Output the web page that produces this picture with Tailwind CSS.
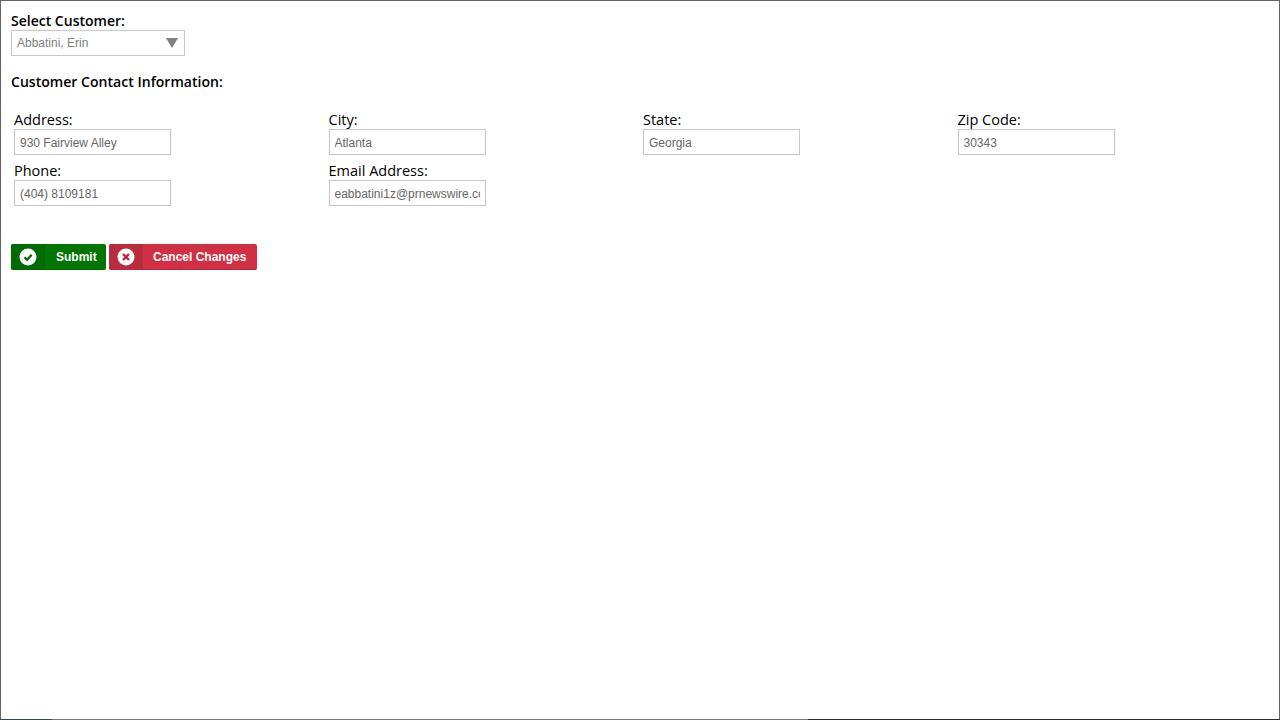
<!DOCTYPE html>
<html lang="en">

<head>
    <meta charset="UTF-8">
    <title>Customer Contact Information</title>
    <script src="https://cdn.jsdelivr.net/npm/@tailwindcss/browser@4"></script>
</head>

<body class="bg-white overflow-hidden">
    <div class="w-[1280px] h-[720px] border-x border-t border-[#5f6368] flex flex-col font-['Open_Sans',sans-serif] text-black">
        <div class="flex-1 pl-[10px] pt-[12px]">
            <div class="text-[14px] leading-[16px] font-semibold">Select Customer:</div>
            <div class="mt-[1px] w-[174px] h-[26px] border border-[#c8c8c8] flex items-center justify-between pl-[5px] pr-[6px] font-['Liberation_Sans',sans-serif] text-[12px] text-[#808080]">
                <span>Abbatini, Erin</span>
                <svg width="12" height="10" viewBox="0 0 12 10"><path d="M0 0h12L6 10z" fill="#808080"></path></svg>
            </div>

            <div class="mt-[17px] text-[14.07px] leading-[18px] font-semibold">Customer Contact Information:</div>

            <div class="mt-[19px] ml-[3px] grid grid-cols-[repeat(4,314.5px)] gap-y-[6px]">
                <div>
                    <label class="block text-[14.5px] leading-[19px]">Address:</label>
                    <input type="text" value="930 Fairview Alley" class="block w-[157px] h-[26px] border border-[#c8c8c8] pl-[5px] pr-[5px] pt-[2px] font-['Liberation_Sans',sans-serif] text-[12px] text-[#666666]">
                </div>
                <div>
                    <label class="block text-[14.5px] leading-[19px]">City:</label>
                    <input type="text" value="Atlanta" class="block w-[157px] h-[26px] border border-[#c8c8c8] pl-[5px] pr-[5px] pt-[2px] font-['Liberation_Sans',sans-serif] text-[12px] text-[#666666]">
                </div>
                <div>
                    <label class="block text-[14.5px] leading-[19px]">State:</label>
                    <input type="text" value="Georgia" class="block w-[157px] h-[26px] border border-[#c8c8c8] pl-[5px] pr-[5px] pt-[2px] font-['Liberation_Sans',sans-serif] text-[12px] text-[#666666]">
                </div>
                <div>
                    <label class="block text-[14.5px] leading-[19px]">Zip Code:</label>
                    <input type="text" value="30343" class="block w-[157px] h-[26px] border border-[#c8c8c8] pl-[5px] pr-[5px] pt-[2px] font-['Liberation_Sans',sans-serif] text-[12px] text-[#666666]">
                </div>
                <div>
                    <label class="block text-[14.5px] leading-[19px]">Phone:</label>
                    <input type="text" value="(404) 8109181" class="block w-[157px] h-[26px] border border-[#c8c8c8] pl-[5px] pr-[5px] pt-[2px] font-['Liberation_Sans',sans-serif] text-[12px] text-[#666666]">
                </div>
                <div>
                    <label class="block text-[14.5px] leading-[19px]">Email Address:</label>
                    <input type="text" value="eabbatini1z@prnewswire.com" class="block w-[157px] h-[26px] border border-[#c8c8c8] pl-[5px] pr-[5px] pt-[2px] font-['Liberation_Sans',sans-serif] text-[12px] text-[#666666]">
                </div>
            </div>

            <div class="mt-[38px] flex gap-[3px] font-['Liberation_Sans',sans-serif] text-[12px] font-bold text-white">
                <button class="w-[95px] h-[26px] flex rounded-[2px] bg-[#007500] overflow-hidden border-b border-[#006400]">
                    <span class="w-[34px] h-full bg-[#006b00] flex items-center justify-center">
                        <svg width="18" height="18" viewBox="0 0 18 18"><circle cx="9" cy="9" r="8.5" fill="#fff"></circle><path d="M5.5 9.2l2.6 2.6 4.6-5" fill="none" stroke="#006b00" stroke-width="2.2"></path></svg>
                    </span>
                    <span class="ml-[11px] leading-[26px]">Submit</span>
                </button>
                <button class="w-[148px] h-[26px] flex rounded-[2px] bg-[#d13044] overflow-hidden border-b border-[#b92a3c]">
                    <span class="w-[34px] h-full bg-[#b92c3e] flex items-center justify-center">
                        <svg width="18" height="18" viewBox="0 0 18 18"><circle cx="9" cy="9" r="8.5" fill="#fff"></circle><path d="M6 6l6 6M12 6l-6 6" fill="none" stroke="#b92c3e" stroke-width="2.4"></path></svg>
                    </span>
                    <span class="ml-[10px] leading-[26px]">Cancel Changes</span>
                </button>
            </div>
        </div>
        <div class="flex h-[1px] -mx-[1px]">
            <div class="w-[52px] bg-[#2f4860]"></div>
            <div class="w-[756px] bg-[#777777]"></div>
            <div class="flex-1 bg-[#2c3033]"></div>
        </div>
    </div>
</body>

</html>
